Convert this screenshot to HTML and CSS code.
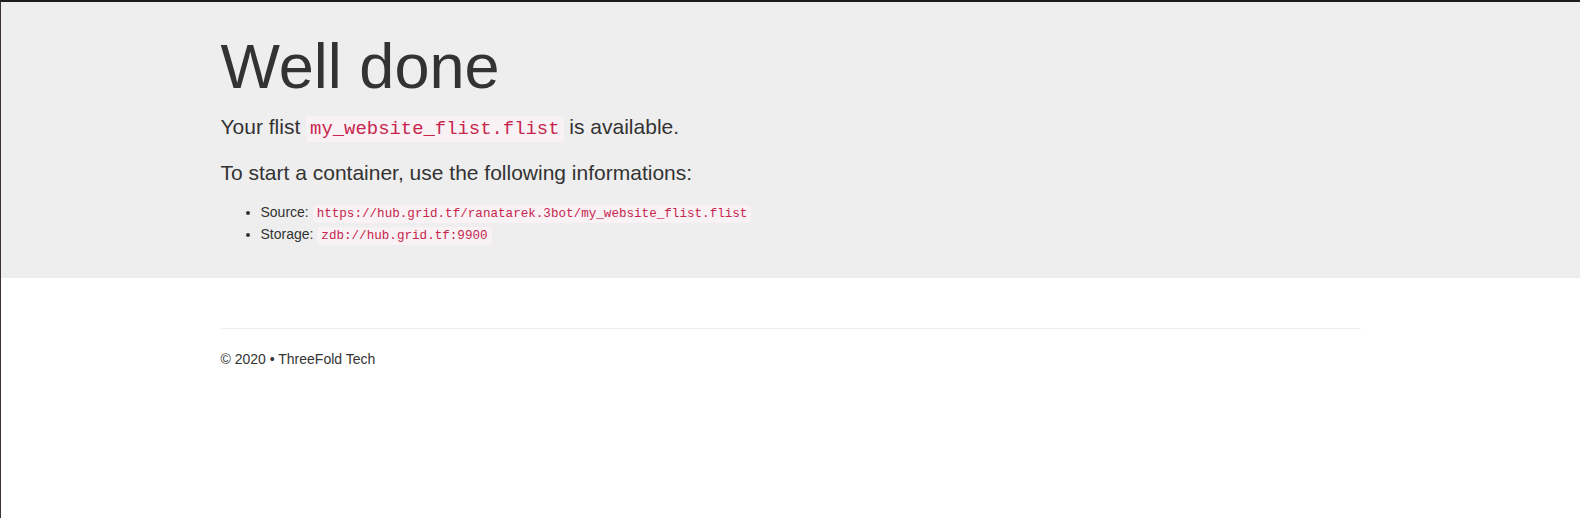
FILE: index.html
```html
<!DOCTYPE html>
<html>
<head>
<meta charset="utf-8">
<title>Well done</title>
<link rel="stylesheet" href="styles.css">
</head>
<body>
<div class="jumbotron">
  <div class="container">
    <h1 class="title">Well done</h1>
    <p class="lead first">Your flist <code>my_website_flist.flist</code> is available.</p>
    <p class="lead">To start a container, use the following informations:</p>
    <ul class="info">
      <li>Source: <code>https://hub.grid.tf/ranatarek.3bot/my_website_flist.flist</code></li>
      <li>Storage: <code>zdb://hub.grid.tf:9900</code></li>
    </ul>
  </div>
</div>
<div class="container">
  <footer class="footer">
    <hr class="rule">
    <p class="copy">&copy; 2020 &bull; ThreeFold Tech</p>
  </footer>
</div>
</body>
</html>
```

FILE: styles.css
```css
html, body {
  margin: 0;
  padding: 0;
}
body {
  font-family: "Liberation Sans", Arial, Helvetica, sans-serif;
  font-size: 14px;
  line-height: 1.42857143;
  color: #333;
  background: #fff;
  border-top: 2px solid #1c1c1c;
  border-left: 1px solid #3c3236;
  min-height: 518px;
  box-sizing: border-box;
}
.container {
  width: 1170px;
  margin: 0 auto;
  padding: 0 15px;
  box-sizing: border-box;
}
.container::before,
.container::after {
  content: " ";
  display: table;
}
.container::after { clear: both; }
.jumbotron {
  background: #eee;
  padding: 30px 0 22px;
  margin-bottom: 30px;
}
.title {
  font-size: 63px;
  font-weight: 500;
  line-height: 1.1;
  margin: 0 0 11px;
  color: inherit;
}
.lead {
  font-size: 21px;
  font-weight: 200;
  line-height: 30px;
  margin: 0 0 15px;
}
.lead.first {
  margin-bottom: 14px;
}
code {
  font-family: "Liberation Mono", "Courier New", monospace;
  font-size: 90%;
  padding: 2px 4px;
  color: #c7254e;
  background: #f9f2f4;
  border-radius: 4px;
}
.info {
  margin: -1px 0 10px;
  padding-left: 40px;
  line-height: 20px;
}
.rule {
  margin: 20px 0;
  border: 0;
  border-top: 1px solid #eee;
  height: 0;
}
.copy {
  margin: 0 0 10px;
}
```
